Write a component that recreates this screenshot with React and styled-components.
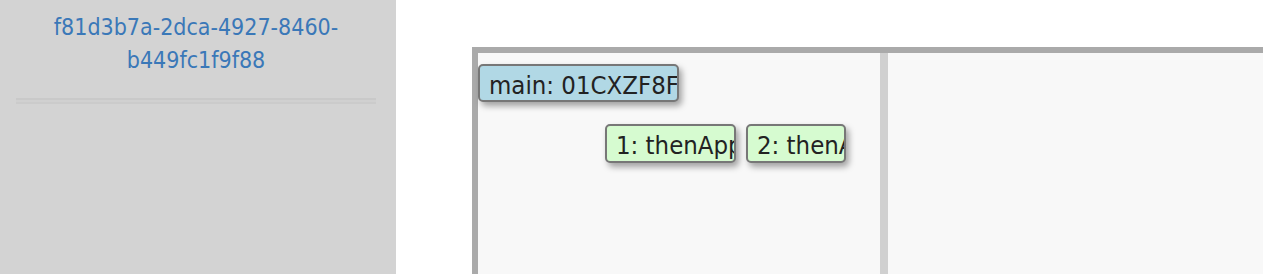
import React from "react";
import styled, { createGlobalStyle } from "styled-components";

const Global = createGlobalStyle`
  html, body { margin: 0; padding: 0; background: #fff; }
  body { font-family: "DejaVu Sans Condensed", "DejaVu Sans", Verdana, sans-serif; font-stretch: condensed; }
`;

const Layout = styled.div`
  display: flex;
  width: 1263px;
  height: 274px;
  overflow: hidden;
`;

const Sidebar = styled.aside`
  flex: 0 0 396px;
  background: #d3d3d3;
  padding: 11px 20px 0 16px;
  box-sizing: border-box;
`;

const RunLink = styled.a`
  display: block;
  text-align: center;
  color: #3a78b8;
  font-size: 23px;
  line-height: 33px;
  text-decoration: none;
  padding: 0 24px;
`;

const Rule = styled.hr`
  margin: 21px 0 0;
  height: 2px;
  border: none;
  border-top: 2px solid #c9c9c9;
  border-bottom: 2px solid #cbcbcb;
  background: #d0d0d0;
`;

const Main = styled.main`
  flex: 1;
  background: #fff;
  padding: 47px 0 0 76px;
  min-width: 0;
`;

const Board = styled.div`
  display: flex;
  height: 300px;
  border-top: 6px solid #aaaaaa;
  border-left: 6px solid #aaaaaa;
`;

const Pane = styled.div`
  position: relative;
  background: #f8f8f8;
  flex: ${(p) => (p.$grow ? "1" : "0 0 402px")};
`;

const Splitter = styled.div`
  flex: 0 0 8px;
  background: #d0d0d0;
`;

const Node = styled.div`
  position: absolute;
  box-sizing: border-box;
  border: 2px solid #777;
  border-radius: 5px;
  background: ${(p) => (p.$kind === "main" ? "#b1d8e5" : "#d6fbd0")};
  box-shadow: 3px 4px 6px rgba(0, 0, 0, 0.35);
  color: #222;
  font-size: 25.5px;
  line-height: 38px;
  padding-left: 9px;
  white-space: nowrap;
  overflow: hidden;
`;

const nodes = [
  { id: "main", label: "main: 01CXZF8F", x: 0, y: 11, w: 201, h: 38, kind: "main" },
  { id: "1", label: "1: thenApply", x: 127, y: 71, w: 131, h: 39, kind: "task" },
  { id: "2", label: "2: thenApply", x: 268, y: 71, w: 100, h: 39, kind: "task" },
];

export default function App() {
  return (
    <>
      <Global />
      <Layout>
        <Sidebar>
          <RunLink href="#">f81d3b7a-2dca-4927-8460-b449fc1f9f88</RunLink>
          <Rule />
        </Sidebar>
        <Main>
          <Board>
            <Pane>
              {nodes.map((n) => (
                <Node
                  key={n.id}
                  $kind={n.kind}
                  style={{ left: n.x, top: n.y, width: n.w, height: n.h }}
                >
                  {n.label}
                </Node>
              ))}
            </Pane>
            <Splitter />
            <Pane $grow />
          </Board>
        </Main>
      </Layout>
    </>
  );
}
